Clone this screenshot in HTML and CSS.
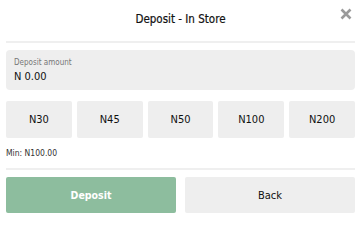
FILE: index.html
```html
<!DOCTYPE html>
<html>
<head>
<meta charset="utf-8">
<link rel="stylesheet" href="styles.css">
</head>
<body>
<div class="modal">
  <div class="header">
    <div class="title">Deposit - In Store</div>
    <div class="close" aria-label="close">
      <svg width="12" height="12" viewBox="0 0 12 12"><path d="M1.5 1.5 L10.5 10.5 M10.5 1.5 L1.5 10.5" stroke="#9a9a9a" stroke-width="2.6" stroke-linecap="butt"/></svg>
    </div>
  </div>
  <div class="field">
    <div class="label">Deposit amount</div>
    <div class="value">N 0.00</div>
  </div>
  <div class="presets">
    <div class="preset">N30</div>
    <div class="preset">N45</div>
    <div class="preset">N50</div>
    <div class="preset">N100</div>
    <div class="preset">N200</div>
  </div>
  <div class="min">Min: N100.00</div>
  <div class="actions">
    <div class="btn primary">Deposit</div>
    <div class="btn secondary">Back</div>
  </div>
</div>
</body>
</html>
```
FILE: styles.css
```css
html, body {
  margin: 0;
  padding: 0;
  background: #fff;
}
body {
  font-family: "DejaVu Sans Condensed", "DejaVu Sans", sans-serif;
  color: #222;
}
.modal {
  width: 363px;
  padding: 0 8px 0 6px;
  box-sizing: border-box;
}
.header {
  position: relative;
  height: 41px;
  border-bottom: 2px solid #efefef;
  display: flex;
  align-items: center;
  justify-content: center;
}
.title {
  font-size: 11.5px;
  color: #111;
  margin-top: -3px;
  -webkit-text-stroke: 0.2px #111;
}
.close {
  position: absolute;
  right: 3px;
  top: 8px;
  width: 12px;
  height: 12px;
}
.close svg { display: block; }
.field {
  margin-top: 7px;
  height: 40px;
  background: #eeeeee;
  border-radius: 4px;
  padding: 8px 8px 0 8px;
  box-sizing: border-box;
}
.label {
  font-size: 8px;
  color: #777;
  line-height: 10px;
}
.value {
  font-size: 11px;
  color: #111;
  line-height: 14px;
  margin-top: 2px;
}
.presets {
  margin-top: 11px;
  display: grid;
  grid-template-columns: repeat(5, 1fr);
  gap: 5px;
}
.preset {
  height: 37px;
  background: #eeeeee;
  border-radius: 2px;
  display: flex;
  align-items: center;
  justify-content: center;
  font-size: 11px;
  color: #111;
}
.min {
  font-size: 8.5px;
  color: #333;
  margin-top: 10px;
  line-height: 11px;
  padding-bottom: 9px;
  border-bottom: 2px solid #efefef;
}
.actions {
  margin-top: 7px;
  display: grid;
  grid-template-columns: 1fr 1fr;
  gap: 9px;
}
.btn {
  height: 36px;
  border-radius: 2px;
  display: flex;
  align-items: center;
  justify-content: center;
  font-size: 11px;
}
.primary {
  background: #8dbd9e;
  color: #fff;
  font-weight: bold;
  font-size: 10.5px;
}
.secondary {
  background: #eeeeee;
  color: #111;
}
```
